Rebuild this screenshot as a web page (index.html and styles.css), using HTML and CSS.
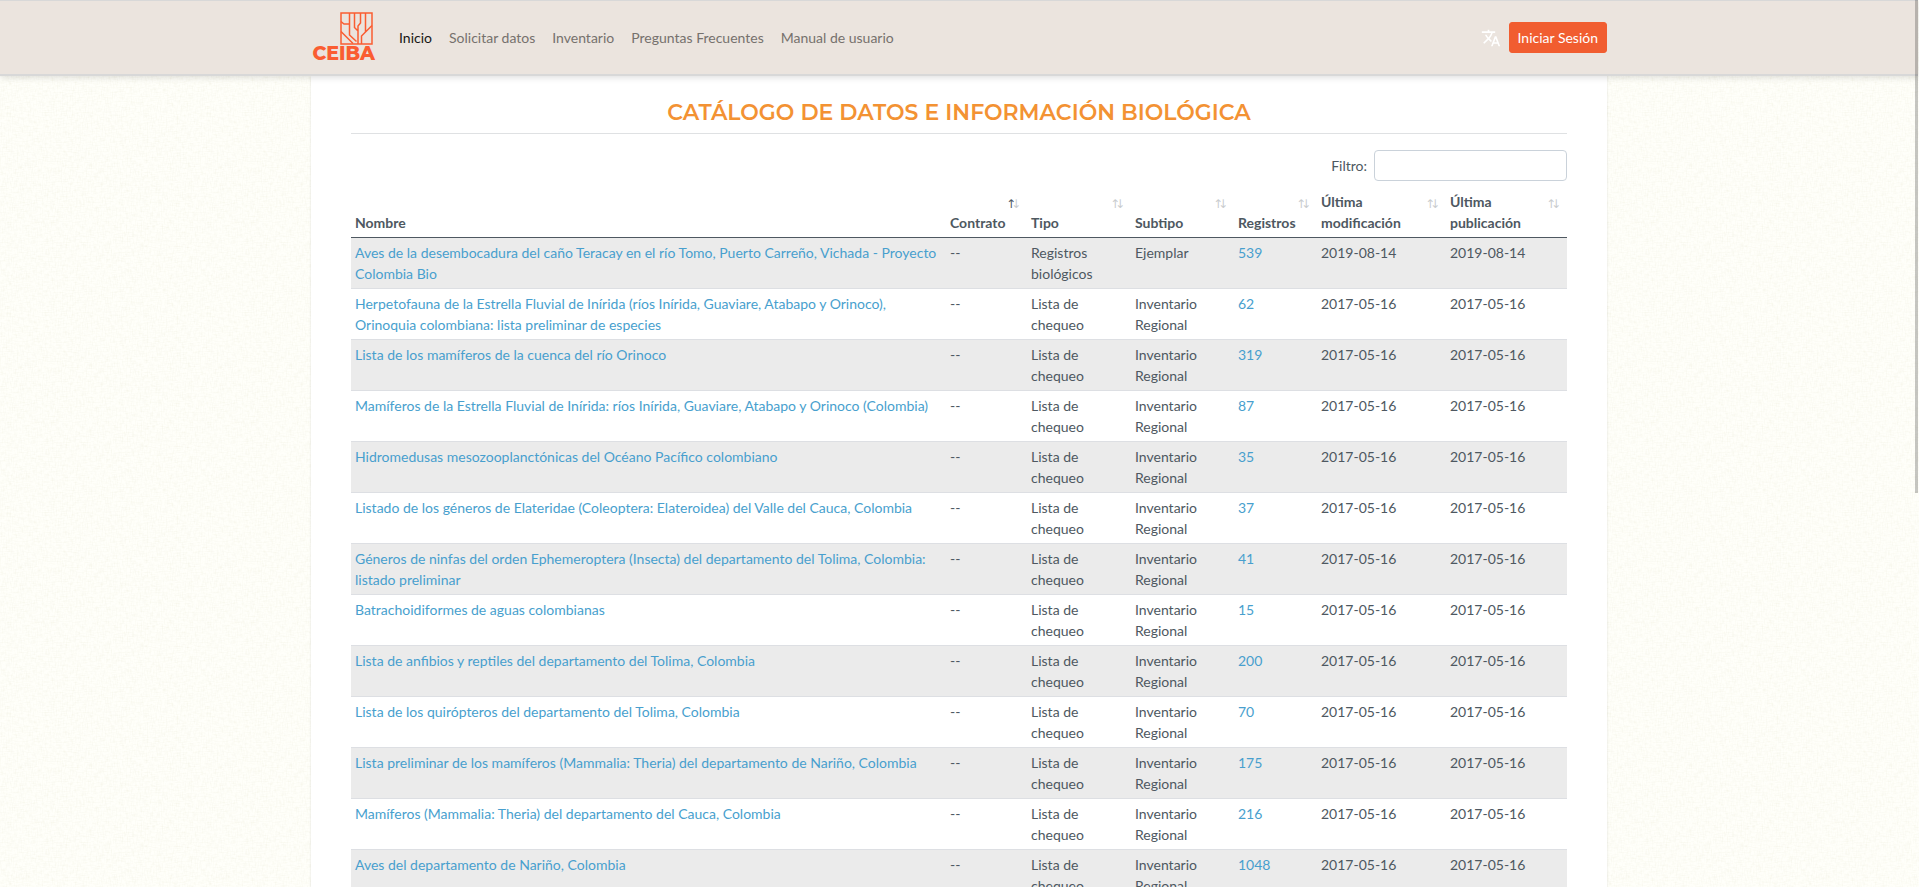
FILE: index.html
```html
<!DOCTYPE html>
<html lang="es">
<head>
<meta charset="utf-8">
<meta name="viewport" content="width=device-width, initial-scale=1">
<title>CEIBA</title>
<link rel="stylesheet" href="styles.css">
</head>
<body>
<header class="topbar">
  <div class="container topbar-inner">
    <a class="brand" href="#">
      <svg class="brand-tree" viewBox="0 0 33 33" aria-hidden="true">
        <rect x="1" y="1" width="31" height="31"/>
        <path d="M1 9.500L4 12H9.500M9.500 1V23L16.500 29.500M1 19.500L13 31.500M14.500 1V15.500L18 19V32M20.500 1V11L18 14V19M25.500 1V20M32 13.500L21.500 24V32"/>
      </svg>
      <span class="brand-name">CEIBA</span>
    </a>
    <nav class="menu">
      <a class="menu-link active" href="#">Inicio</a>
      <a class="menu-link" href="#">Solicitar datos</a>
      <a class="menu-link" href="#">Inventario</a>
      <a class="menu-link" href="#">Preguntas Frecuentes</a>
      <a class="menu-link" href="#">Manual de usuario</a>
    </nav>
    <div class="actions">
      <button class="lang" type="button" aria-label="Idioma">
        <svg class="lang-icon" viewBox="0 0 24 24" aria-hidden="true"><path d="M12.870 15.070l-2.540-2.510.03-.03A17.520 17.520 0 0 0 14.070 6H17V4h-7V2H8v2H1v2h11.170C11.500 7.920 10.440 9.750 9 11.350 8.070 10.320 7.300 9.190 6.690 8h-2c.73 1.630 1.730 3.170 2.980 4.560l-5.090 5.020L4 19l5-5 3.110 3.110.76-2.040zM18.500 10h-2L12 22h2l1.120-3h4.750L21 22h2l-4.500-12zm-2.620 7l1.620-4.330L19.120 17h-3.240z"/></svg>
      </button>
      <button class="login" type="button">Iniciar Sesión</button>
    </div>
  </div>
</header>
<main class="container sheet">
  <h1 class="title">CATÁLOGO DE DATOS E INFORMACIÓN BIOLÓGICA</h1>
  <div class="filter">
    <label for="filtro">Filtro:</label>
    <input class="filter-input" id="filtro" type="search">
  </div>
  <table class="catalog">
    <colgroup>
      <col><col class="col-contract"><col class="col-kind"><col class="col-subkind"><col class="col-count"><col class="col-modified"><col class="col-published">
    </colgroup>
    <thead>
      <tr>
        <th scope="col">Nombre</th>
        <th scope="col" class="sortable sorted">Contrato</th>
        <th scope="col" class="sortable">Tipo</th>
        <th scope="col" class="sortable">Subtipo</th>
        <th scope="col" class="sortable">Registros</th>
        <th scope="col" class="sortable">Última modificación</th>
        <th scope="col" class="sortable">Última publicación</th>
      </tr>
    </thead>
    <tbody id="rows"></tbody>
  </table>
</main>
<div class="scroll-thumb"></div>
<script src="catalog.js"></script>
</body>
</html>
```
FILE: catalog.js
```js
const list = ["Lista de chequeo", "Inventario Regional", "2017-05-16"];
const records = [
  ["Aves de la desembocadura del caño Teracay en el río Tomo, Puerto Carreño, Vichada - Proyecto Colombia Bio", 539, "Registros biológicos", "Ejemplar", "2019-08-14"],
  ["Herpetofauna de la Estrella Fluvial de Inírida (ríos Inírida, Guaviare, Atabapo y Orinoco), Orinoquia colombiana: lista preliminar de especies", 62, ...list],
  ["Lista de los mamíferos de la cuenca del río Orinoco", 319, ...list],
  ["Mamíferos de la Estrella Fluvial de Inírida: ríos Inírida, Guaviare, Atabapo y Orinoco (Colombia)", 87, ...list],
  ["Hidromedusas mesozooplanctónicas del Océano Pacífico colombiano", 35, ...list],
  ["Listado de los géneros de Elateridae (Coleoptera: Elateroidea) del Valle del Cauca, Colombia", 37, ...list],
  ["Géneros de ninfas del orden Ephemeroptera (Insecta) del departamento del Tolima, Colombia: listado preliminar", 41, ...list],
  ["Batrachoidiformes de aguas colombianas", 15, ...list],
  ["Lista de anfibios y reptiles del departamento del Tolima, Colombia", 200, ...list],
  ["Lista de los quirópteros del departamento del Tolima, Colombia", 70, ...list],
  ["Lista preliminar de los mamíferos (Mammalia: Theria) del departamento de Nariño, Colombia", 175, ...list],
  ["Mamíferos (Mammalia: Theria) del departamento del Cauca, Colombia", 216, ...list],
  ["Aves del departamento de Nariño, Colombia", 1048, ...list]
];
document.getElementById("rows").innerHTML = records.map(([name, count, kind, subkind, date]) =>
  `<tr><td><a href="#">${name}</a></td><td>--</td><td>${kind}</td><td>${subkind}</td><td><a href="#">${count}</a></td><td>${date}</td><td>${date}</td></tr>`
).join("");
```
FILE: styles.css
```css
*, *::before, *::after { box-sizing: border-box; }

body {
  margin: 0;
  padding-right: 1px;
  font: 14px/21px Lato, "Liberation Sans", sans-serif;
  color: #4e5861;
  background-color: #fffffa;
  background-image: url("data:image/svg+xml,%3Csvg xmlns='http://www.w3.org/2000/svg' width='200' height='200'%3E%3Cfilter id='a' x='0' y='0' width='1' height='1'%3E%3CfeTurbulence type='fractalNoise' baseFrequency='.16 .8' numOctaves='2' stitchTiles='stitch'/%3E%3CfeColorMatrix values='0 0 0 0 .78 0 0 0 0 .77 0 0 0 0 .6 .45 0 0 0 -.2'/%3E%3C/filter%3E%3Cfilter id='b' x='0' y='0' width='1' height='1'%3E%3CfeTurbulence type='fractalNoise' baseFrequency='.8 .16' numOctaves='2' stitchTiles='stitch'/%3E%3CfeColorMatrix values='0 0 0 0 .78 0 0 0 0 .77 0 0 0 0 .6 .45 0 0 0 -.2'/%3E%3C/filter%3E%3Crect width='200' height='200' filter='url(%23a)'/%3E%3Crect width='200' height='200' filter='url(%23b)'/%3E%3C/svg%3E");
}

a { color: #489fce; text-decoration: none; }
button, input { font: inherit; }

.container { width: 100%; max-width: 1296px; margin: 0 auto; }

.topbar {
  position: sticky;
  top: 0;
  z-index: 2;
  background: #ebe4de;
  border-top: 1px solid #d8d8d8;
  border-bottom: 2px solid #d8d8d8;
  box-shadow: 0 2px 6px rgba(0, 0, 0, .12);
}
.topbar-inner { display: flex; align-items: center; min-height: 73px; }

.brand { display: flex; flex-direction: column; align-items: flex-end; width: 64px; color: #fa5d32; }
.brand-tree { width: 33px; height: 33px; margin-right: 2px; fill: none; stroke: currentColor; stroke-width: 1.5; }
.brand-name { font: 800 19px/18px Montserrat, Inter, sans-serif; }

.menu { display: flex; gap: 17px; margin-left: 24px; }
.menu-link { color: #76716d; }
.menu-link.active { color: #171615; }

.actions { display: flex; align-items: center; gap: 8px; margin-left: auto; }
.lang { display: flex; padding: 0; border: 0; background: none; }
.lang-icon { width: 20px; height: 20px; fill: #fff; }
.login {
  padding: 4px 8px;
  border: 1px solid #f15d30;
  border-radius: 3px;
  color: #fff;
  background: #f15d30;
}

.sheet {
  padding: 20px 40px;
  background: #fff;
  box-shadow: 0 0 2px rgba(0, 0, 0, .12);
}

.title {
  margin: 0 0 16px;
  padding-bottom: 3px;
  border-bottom: 1px solid #dfe1e3;
  font: 600 22px/34px Montserrat, Inter, sans-serif;
  text-align: center;
  color: #f39233;
}

.filter { display: flex; justify-content: flex-end; align-items: center; gap: 7px; margin-bottom: 6px; }
.filter-input {
  width: 193px;
  height: 31px;
  padding: 4px 8px;
  border: 1px solid #cad2da;
  border-radius: 4px;
  background: #fff;
}

.catalog { width: 100%; table-layout: fixed; border-spacing: 0; }
.col-contract { width: 81px; }
.col-kind { width: 104px; }
.col-subkind { width: 103px; }
.col-count { width: 83px; }
.col-modified { width: 129px; }
.col-published { width: 121px; }

th, td { padding: 4px; text-align: left; }
th { position: relative; vertical-align: bottom; border-bottom: 1px solid #4e5861; }
td { vertical-align: top; border-bottom: 1px solid #dddfe3; }
.sortable { padding-right: 16px; }
.sortable::before,
.sortable::after {
  position: absolute;
  top: 7px;
  font-family: "DejaVu Sans", sans-serif;
  font-weight: 400;
  font-size: 12px;
  opacity: .3;
}
.sortable::before { content: "\2191"; right: 11px; }
.sortable::after { content: "\2193"; right: 6px; }
.sorted::before { opacity: 1; }
tbody tr:nth-child(odd) { background: #ebebeb; }

.scroll-thumb {
  position: fixed;
  top: 0;
  right: 1px;
  z-index: 3;
  width: 3px;
  height: 493px;
  background: rgba(0, 0, 0, .22);
}
```
